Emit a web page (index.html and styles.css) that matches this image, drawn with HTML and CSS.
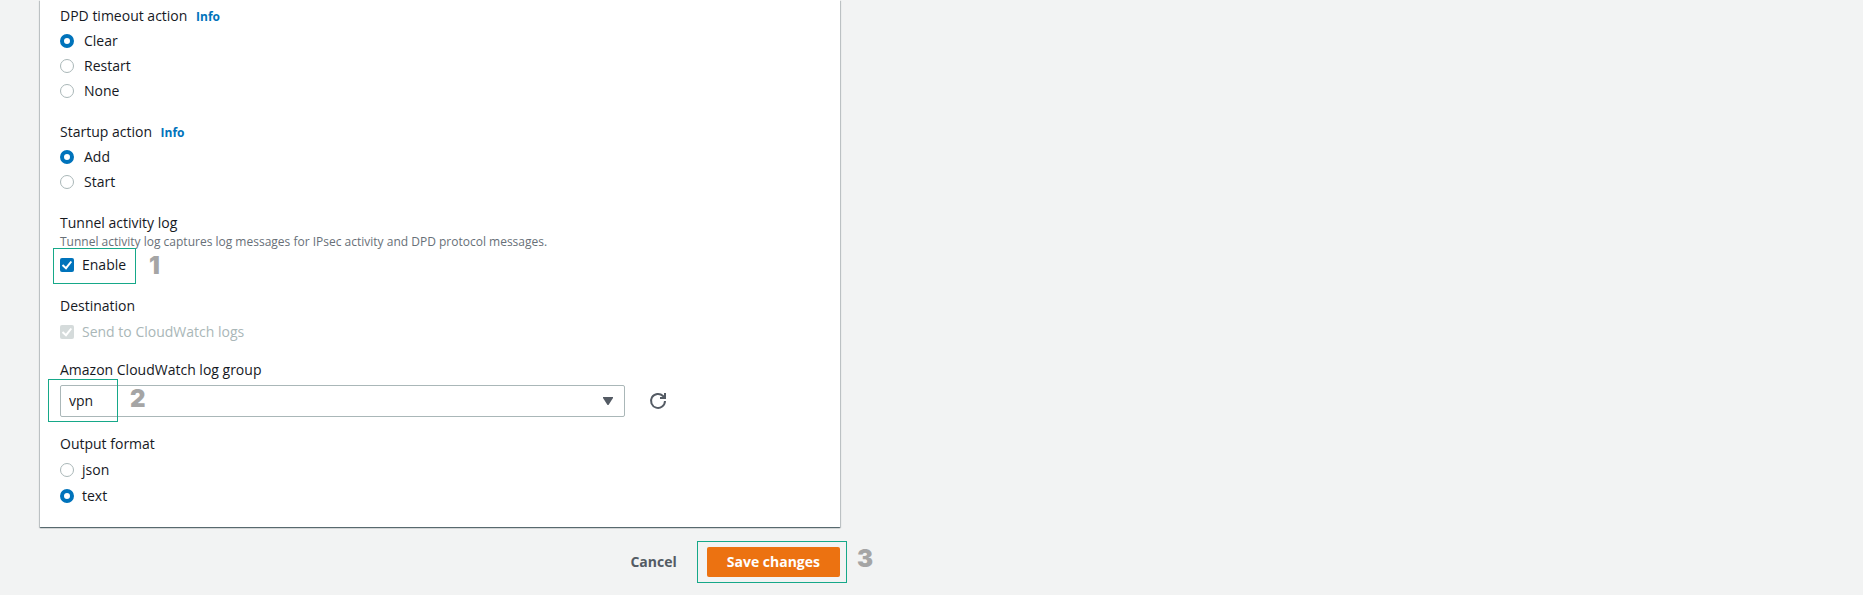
FILE: index.html
```html
<!DOCTYPE html>
<html lang="en">
<head>
<meta charset="utf-8">
<meta name="viewport" content="width=device-width, initial-scale=1">
<title>Modify VPN tunnel options</title>
<link rel="stylesheet" href="styles.css">
</head>
<body>
<form class="page">
  <section class="card">
    <fieldset class="group">
      <legend class="label">DPD timeout action <a class="info" href="#dpd">Info</a></legend>
      <label class="option"><input class="radio" type="radio" name="dpd" checked>Clear</label>
      <label class="option"><input class="radio" type="radio" name="dpd">Restart</label>
      <label class="option"><input class="radio" type="radio" name="dpd">None</label>
    </fieldset>
    <fieldset class="group">
      <legend class="label">Startup action <a class="info" href="#startup">Info</a></legend>
      <label class="option"><input class="radio" type="radio" name="startup" checked>Add</label>
      <label class="option"><input class="radio" type="radio" name="startup">Start</label>
    </fieldset>
    <fieldset class="group compact">
      <legend class="label">Tunnel activity log</legend>
      <p class="hint">Tunnel activity log captures log messages for IPsec activity and DPD protocol messages.</p>
      <div class="marked">
        <label class="option"><input class="check" type="checkbox" checked>Enable</label>
        <span class="frame frame-enable"></span><span class="step step-enable">1</span>
      </div>
    </fieldset>
    <fieldset class="group compact">
      <legend class="label">Destination</legend>
      <label class="option disabled"><input class="check" type="checkbox" checked disabled>Send to CloudWatch logs</label>
    </fieldset>
    <div class="group near">
      <label class="label" for="log-group">Amazon CloudWatch log group</label>
      <div class="picker">
        <div class="marked">
          <select class="select" id="log-group"><option>vpn</option></select>
          <svg class="arrow" viewBox="0 0 10 8" aria-hidden="true"><path d="M0 0h10v1L5.500 8h-1L0 1z"/></svg>
          <span class="frame frame-vpn"></span><span class="step step-vpn">2</span>
        </div>
        <button class="refresh" type="button" aria-label="Refresh">
          <svg viewBox="0 0 16 16" aria-hidden="true"><path d="M15 8a7 7 0 1 1-2-5l2 2M10 5h5V0"/></svg>
        </button>
      </div>
    </div>
    <fieldset class="group compact last">
      <legend class="label">Output format</legend>
      <label class="option"><input class="radio" type="radio" name="format">json</label>
      <label class="option"><input class="radio" type="radio" name="format" checked>text</label>
    </fieldset>
  </section>
  <footer class="actions">
    <button class="button" type="button">Cancel</button>
    <div class="marked">
      <button class="button primary" type="button">Save changes</button>
      <span class="frame frame-save"></span><span class="step step-save">3</span>
    </div>
  </footer>
</form>
</body>
</html>
```
FILE: styles.css
```css
* {
  box-sizing: border-box;
}

body {
  margin: 0;
  background: #f2f3f3;
  color: #16191f;
  font: 14px/20px "Open Sans", "Noto Sans", sans-serif;
}

.page {
  max-width: 880px;
  padding: 0 40px 16px;
}

.card {
  display: flex;
  flex-direction: column;
  padding: 6px 20px 21px;
  background: #fff;
  box-shadow: 0 1px 1px 0 rgba(0, 28, 36, 0.5), 1px 1px 1px 0 rgba(0, 28, 36, 0.15), -1px 1px 1px 0 rgba(0, 28, 36, 0.15);
}

.group {
  min-width: 0;
  margin: 0;
  padding: 0;
  border: 0;
}

.group + .group {
  margin-top: 21px;
}

.group + .near {
  margin-top: 18px;
}

.group + .last {
  margin-top: 17px;
}

.label {
  display: block;
  padding: 0;
}

.info {
  margin-left: 5px;
  color: #0073bb;
  font-size: 12px;
  font-weight: 700;
  text-decoration: none;
}

.option {
  display: flex;
  align-items: center;
  gap: 10px;
  margin-top: 5px;
}

.label + .option {
  margin-top: 4px;
}

.compact .option {
  gap: 8px;
  margin-top: 6px;
}

.compact .marked .option {
  margin-top: 5px;
}

.disabled {
  color: #aab7b8;
}

.hint {
  margin: 1px 0 0;
  color: #687078;
  font-size: 12px;
  line-height: 16px;
}

.radio,
.check {
  appearance: none;
  flex: none;
  width: 14px;
  height: 14px;
  margin: 0;
  border: 1px solid #aab7b8;
  background: #fff;
}

.radio {
  border-radius: 50%;
}

.radio:checked {
  border: 4px solid #0073bb;
}

.check {
  border: 0;
  border-radius: 2px;
  background: #0073bb url("data:image/svg+xml,%3Csvg xmlns='http://www.w3.org/2000/svg' viewBox='0 0 14 14'%3E%3Cpath d='M2.500 7l3.500 3.200L11.300 3.500' fill='none' stroke='white' stroke-width='2'/%3E%3C/svg%3E");
}

.check:disabled {
  background-color: #d5dbdb;
}

.marked {
  position: relative;
}

.picker {
  display: grid;
  grid-template-columns: 3fr 1fr;
  gap: 7px;
  align-items: center;
  margin-top: 5px;
}

.select {
  display: block;
  appearance: none;
  width: 100%;
  height: 32px;
  padding: 0 32px 0 8px;
  border: 1px solid #aab7b8;
  border-radius: 2px;
  background: #fff;
  color: inherit;
  font: inherit;
}

.arrow {
  position: absolute;
  right: 12px;
  top: 12px;
  width: 10px;
  height: 8px;
  fill: #545b64;
  pointer-events: none;
}

.refresh {
  justify-self: start;
  padding: 0 18px;
  border: 0;
  background: none;
}

.refresh svg {
  display: block;
  width: 16px;
  height: 16px;
  overflow: visible;
  fill: none;
  stroke: #545b64;
  stroke-width: 2;
}

.actions {
  display: flex;
  justify-content: flex-end;
  gap: 10px;
  padding-top: 20px;
}

.button {
  display: block;
  height: 30px;
  padding: 0 20px;
  border: 0;
  border-radius: 2px;
  background: none;
  color: #545b64;
  font: inherit;
  font-weight: 700;
}

.primary {
  background: #ec7211;
  color: #fff;
}

.frame {
  position: absolute;
  border: 1px solid #16a889;
  pointer-events: none;
}

.frame-enable {
  left: -7px;
  top: -7px;
  width: 83px;
  height: 36px;
}

.frame-vpn {
  left: -12px;
  top: -6px;
  width: 70px;
  height: 43px;
}

.frame-save {
  inset: -6px -7px -6px -10px;
}

.step {
  position: absolute;
  color: #a5a5a5;
  font: 900 24px/24px Inter, sans-serif;
}

.step-enable {
  left: 89px;
  top: -1px;
}

.step-vpn {
  left: 70px;
  top: 2px;
}

.step-save {
  left: 100%;
  top: 0;
  margin-left: 17px;
}
```
